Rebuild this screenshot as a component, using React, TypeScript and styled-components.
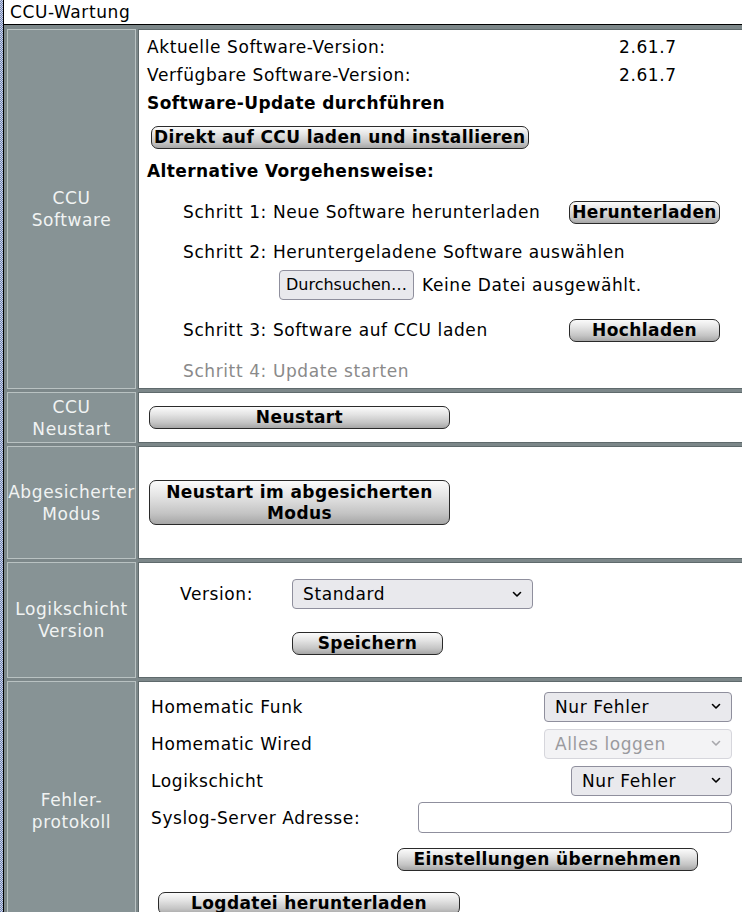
import React from 'react';
import styled, { createGlobalStyle } from 'styled-components';

const GlobalStyle = createGlobalStyle`
  html, body {
    margin: 0;
    padding: 0;
    overflow: hidden;
  }

  body {
    font-family: 'DejaVu Sans', Verdana, sans-serif;
    font-size: 17px;
    letter-spacing: 0.6px;
    background: repeating-conic-gradient(#6f82b4 0 25%, #cfd6e6 0 50%) 0 0 / 2px 2px;
  }
`;

const Frame = styled.div`
  margin-left: 3px;
  width: 800px;
  border-left: 1px solid #000;
  background: #7c8789;
`;

const TitleBar = styled.div`
  height: 24px;
  line-height: 24px;
  padding-left: 6px;
  background: #fff;
  border-bottom: 1px solid #000;
  color: #000;
`;

const Grid = styled.div`
  display: grid;
  grid-template-columns: 129px 1fr;
  grid-template-rows: 360px 51px 113px 116px 260px;
  gap: 3px 2px;
  padding: 4px 0 0 3px;
`;

const HeadCell = styled.div`
  display: flex;
  align-items: center;
  justify-content: center;
  text-align: center;
  padding: 2px 0;
  line-height: 22px;
  color: #f1f3f3;
  background: #879395;
  border: 1px solid #b9c2c2;
  white-space: nowrap;
`;

const BodyCell = styled.div<{ $center?: boolean; $pad?: string }>`
  display: flex;
  flex-direction: column;
  justify-content: ${({ $center }) => ($center ? 'center' : 'flex-start')};
  align-items: flex-start;
  padding: ${({ $pad }) => $pad || '0'};
  background: #fff;
  border: 1px solid #5f6a6c;
  color: #000;
  white-space: nowrap;
`;

const InfoGrid = styled.div`
  display: grid;
  grid-template-columns: 472px auto;
  line-height: 28px;
`;

const Heading = styled.div<{ $mt?: number }>`
  font-weight: bold;
  letter-spacing: 0.4px;
  line-height: 28px;
  margin-top: ${({ $mt }) => $mt || 0}px;
  grid-column: 1 / -1;
`;

const Button = styled.button<{ $w?: number; $tall?: boolean; $mt?: number; $ml?: number }>`
  box-sizing: border-box;
  width: ${({ $w }) => ($w ? `${$w}px` : 'auto')};
  height: ${({ $tall }) => ($tall ? '45px' : '23px')};
  margin: ${({ $mt }) => $mt || 0}px 0 0 ${({ $ml }) => $ml || 0}px;
  padding: 0 2px;
  font-family: 'DejaVu Sans', Verdana, sans-serif;
  font-size: 17px;
  font-weight: bold;
  letter-spacing: 0.4px;
  line-height: 21px;
  color: #000;
  border: 1px solid #2a2a2a;
  border-radius: 7px;
  background: linear-gradient(to bottom, #fbfbfb 0%, #e4e4e4 35%, #c4c4c4 75%, #a6a6a6 100%);
  flex-shrink: 0;
  white-space: nowrap;
`;

const Steps = styled.div`
  padding-left: 36px;
  display: flex;
  flex-direction: column;
`;

const StepRow = styled.div<{ $mt: number; $muted?: boolean }>`
  display: grid;
  grid-template-columns: 386px auto;
  align-items: center;
  height: 28px;
  margin-top: ${({ $mt }) => $mt}px;
  color: ${({ $muted }) => ($muted ? '#8a8a8a' : '#000')};
`;

const FileRow = styled.div`
  display: flex;
  align-items: center;
  gap: 8px;
  margin: 4px 0 0 96px;
`;

const NativeButton = styled.span`
  box-sizing: border-box;
  width: 135px;
  height: 30px;
  line-height: 28px;
  text-align: center;
  font-size: 16px;
  letter-spacing: 0;
  background: #e9e9ed;
  border: 1px solid #8f8f9d;
  border-radius: 4px;
`;

const SelectBox = styled.div<{ $w: number; $disabled?: boolean }>`
  box-sizing: border-box;
  display: flex;
  align-items: center;
  justify-content: space-between;
  width: ${({ $w }) => $w}px;
  height: 30px;
  padding: 0 10px;
  background: ${({ $disabled }) => ($disabled ? '#f3f3f5' : '#e9e9ed')};
  border: 1px solid ${({ $disabled }) => ($disabled ? '#d6d6dc' : '#8f8f9d')};
  border-radius: 4px;
  color: ${({ $disabled }) => ($disabled ? '#9a9a9e' : '#000')};
  justify-self: end;
`;

const TextInput = styled.div`
  box-sizing: border-box;
  width: 314px;
  height: 31px;
  background: #fff;
  border: 1px solid #8f8f9d;
  border-radius: 4px;
  justify-self: end;
`;

const VersionGrid = styled.div`
  display: grid;
  grid-template-columns: 112px auto;
  align-items: center;
  padding: 16px 0 0 41px;
`;

const LogGrid = styled.div`
  display: grid;
  grid-template-columns: 1fr auto;
  grid-auto-rows: 37px;
  align-items: center;
  width: 581px;
`;

const Chevron = ({ color = '#000' }: { color?: string }) => (
  <svg width="10" height="7" viewBox="0 0 10 7">
    <path d="M1.5 1.5 L5 5 L8.5 1.5" fill="none" stroke={color} strokeWidth="1.6" strokeLinecap="round" strokeLinejoin="round" />
  </svg>
);

const Select = ({ value, w, disabled }: { value: string; w: number; disabled?: boolean }) => (
  <SelectBox $w={w} $disabled={disabled}>
    <span>{value}</span>
    <Chevron color={disabled ? '#a8a8ac' : '#000'} />
  </SelectBox>
);

export default function App() {
  return (
    <>
      <GlobalStyle />
      <Frame>
        <TitleBar>CCU-Wartung</TitleBar>
        <Grid>
          <HeadCell>CCU<br />Software</HeadCell>
          <BodyCell $pad="3px 0 0 8px">
            <InfoGrid>
              <span>Aktuelle Software-Version:</span>
              <span>2.61.7</span>
              <span>Verfügbare Software-Version:</span>
              <span>2.61.7</span>
              <Heading>Software-Update durchführen</Heading>
            </InfoGrid>
            <Button $mt={9} $ml={4}>Direkt auf CCU laden und installieren</Button>
            <Heading $mt={8}>Alternative Vorgehensweise:</Heading>
            <Steps>
              <StepRow $mt={13}>
                <span>Schritt 1: Neue Software herunterladen</span>
                <Button $w={151}>Herunterladen</Button>
              </StepRow>
              <StepRow $mt={12}>
                <span>Schritt 2: Heruntergeladene Software auswählen</span>
              </StepRow>
              <FileRow>
                <NativeButton>Durchsuchen…</NativeButton>
                <span>Keine Datei ausgewählt.</span>
              </FileRow>
              <StepRow $mt={16}>
                <span>Schritt 3: Software auf CCU laden</span>
                <Button $w={151}>Hochladen</Button>
              </StepRow>
              <StepRow $mt={13} $muted>
                <span>Schritt 4: Update starten</span>
              </StepRow>
            </Steps>
          </BodyCell>

          <HeadCell>CCU<br />Neustart</HeadCell>
          <BodyCell $center $pad="0 0 0 10px">
            <Button $w={301}>Neustart</Button>
          </BodyCell>

          <HeadCell>Abgesicherter<br />Modus</HeadCell>
          <BodyCell $center $pad="0 0 0 10px">
            <Button $w={301} $tall>Neustart im abgesicherten<br />Modus</Button>
          </BodyCell>

          <HeadCell>Logikschicht<br />Version</HeadCell>
          <BodyCell>
            <VersionGrid>
              <span>Version:</span>
              <Select value="Standard" w={241} />
            </VersionGrid>
            <Button $w={151} $mt={23} $ml={153}>Speichern</Button>
          </BodyCell>

          <HeadCell>Fehler-<br />protokoll</HeadCell>
          <BodyCell $pad="6px 0 0 12px">
            <LogGrid>
              <span>Homematic Funk</span>
              <Select value="Nur Fehler" w={188} />
              <span>Homematic Wired</span>
              <Select value="Alles loggen" w={188} disabled />
              <span>Logikschicht</span>
              <Select value="Nur Fehler" w={161} />
              <span>Syslog-Server Adresse:</span>
              <TextInput />
            </LogGrid>
            <Button $w={301} $mt={12} $ml={246}>Einstellungen übernehmen</Button>
            <Button $w={302} $mt={21} $ml={7}>Logdatei herunterladen</Button>
          </BodyCell>
        </Grid>
      </Frame>
    </>
  );
}
